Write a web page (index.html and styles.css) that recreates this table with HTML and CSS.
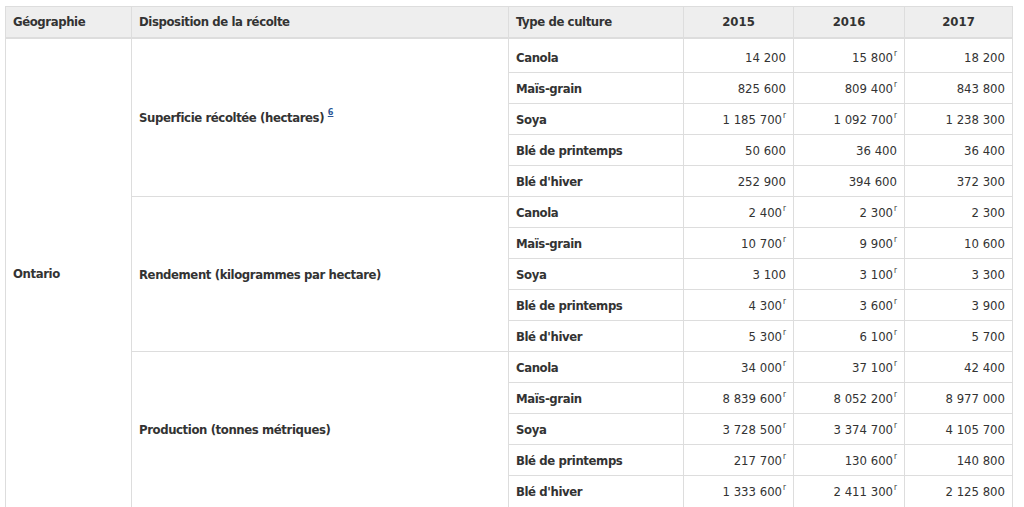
FILE: index.html
```html
<!DOCTYPE html>
<html lang="fr">
<head>
<meta charset="utf-8">
<title>Superficie, rendement et production</title>
<link rel="stylesheet" href="styles.css">
</head>
<body>
<table class="data">
  <colgroup>
    <col class="c-geo"><col class="c-disp"><col class="c-type"><col class="c-y1"><col class="c-y2"><col class="c-y3">
  </colgroup>
  <thead>
    <tr>
      <th>Géographie</th>
      <th>Disposition de la récolte</th>
      <th>Type de culture</th>
      <th class="yr">2015</th>
      <th class="yr">2016</th>
      <th class="yr">2017</th>
    </tr>
  </thead>
  <tbody>
    <tr class="first">
      <th class="geo" rowspan="15">Ontario</th>
      <th class="disp" rowspan="5">Superficie récoltée (hectares) <sup class="fn"><a href="#fn6">6</a></sup></th>
      <th class="crop">Canola</th>
      <td>14&nbsp;200</td><td>15&nbsp;800<sup class="r">r</sup></td><td>18&nbsp;200</td>
    </tr>
    <tr><th class="crop">Maïs-grain</th><td>825&nbsp;600</td><td>809&nbsp;400<sup class="r">r</sup></td><td>843&nbsp;800</td></tr>
    <tr><th class="crop">Soya</th><td>1&nbsp;185&nbsp;700<sup class="r">r</sup></td><td>1&nbsp;092&nbsp;700<sup class="r">r</sup></td><td>1&nbsp;238&nbsp;300</td></tr>
    <tr><th class="crop">Blé de printemps</th><td>50&nbsp;600</td><td>36&nbsp;400</td><td>36&nbsp;400</td></tr>
    <tr><th class="crop">Blé d'hiver</th><td>252&nbsp;900</td><td>394&nbsp;600</td><td>372&nbsp;300</td></tr>

    <tr>
      <th class="disp" rowspan="5">Rendement (kilogrammes par hectare)</th>
      <th class="crop">Canola</th>
      <td>2&nbsp;400<sup class="r">r</sup></td><td>2&nbsp;300<sup class="r">r</sup></td><td>2&nbsp;300</td>
    </tr>
    <tr><th class="crop">Maïs-grain</th><td>10&nbsp;700<sup class="r">r</sup></td><td>9&nbsp;900<sup class="r">r</sup></td><td>10&nbsp;600</td></tr>
    <tr><th class="crop">Soya</th><td>3&nbsp;100</td><td>3&nbsp;100<sup class="r">r</sup></td><td>3&nbsp;300</td></tr>
    <tr><th class="crop">Blé de printemps</th><td>4&nbsp;300<sup class="r">r</sup></td><td>3&nbsp;600<sup class="r">r</sup></td><td>3&nbsp;900</td></tr>
    <tr><th class="crop">Blé d'hiver</th><td>5&nbsp;300<sup class="r">r</sup></td><td>6&nbsp;100<sup class="r">r</sup></td><td>5&nbsp;700</td></tr>

    <tr>
      <th class="disp" rowspan="5">Production (tonnes métriques)</th>
      <th class="crop">Canola</th>
      <td>34&nbsp;000<sup class="r">r</sup></td><td>37&nbsp;100<sup class="r">r</sup></td><td>42&nbsp;400</td>
    </tr>
    <tr><th class="crop">Maïs-grain</th><td>8&nbsp;839&nbsp;600<sup class="r">r</sup></td><td>8&nbsp;052&nbsp;200<sup class="r">r</sup></td><td>8&nbsp;977&nbsp;000</td></tr>
    <tr><th class="crop">Soya</th><td>3&nbsp;728&nbsp;500<sup class="r">r</sup></td><td>3&nbsp;374&nbsp;700<sup class="r">r</sup></td><td>4&nbsp;105&nbsp;700</td></tr>
    <tr><th class="crop">Blé de printemps</th><td>217&nbsp;700<sup class="r">r</sup></td><td>130&nbsp;600<sup class="r">r</sup></td><td>140&nbsp;800</td></tr>
    <tr class="last"><th class="crop">Blé d'hiver</th><td>1&nbsp;333&nbsp;600<sup class="r">r</sup></td><td>2&nbsp;411&nbsp;300<sup class="r">r</sup></td><td>2&nbsp;125&nbsp;800</td></tr>
  </tbody>
</table>
</body>
</html>
```
FILE: styles.css
```css
html {
  overflow: hidden;
}
body {
  margin: 0;
  padding: 6px 0 0 5px;
  background: #fff;
  color: #333;
  font-family: "DejaVu Sans Condensed", "DejaVu Sans", sans-serif;
  font-size: 13px;
}
.data {
  border-collapse: collapse;
  table-layout: fixed;
  width: 1007px;
}
.c-geo { width: 126px; }
.c-disp { width: 377px; }
.c-type { width: 175px; }
.c-y1 { width: 110px; }
.c-y2 { width: 111px; }
.c-y3 { width: 108px; }

.data th,
.data td {
  border: 1px solid #ddd;
  padding: 0 7px;
  height: 30px;
  line-height: 15px;
  vertical-align: middle;
  white-space: nowrap;
}
.data th {
  letter-spacing: -0.4px;
}
.data thead th {
  background: #eeeeee;
  text-align: left;
  font-weight: bold;
  height: 29px;
  padding-bottom: 1px;
  border-bottom: 2px solid #ddd;
}
.data thead th.yr {
  text-align: center;
  letter-spacing: 0;
}
.data tbody th {
  text-align: left;
  font-weight: bold;
}
.data tbody td {
  text-align: right;
  font-weight: normal;
}
.data tr.first th.crop,
.data tr.first td {
  height: 30px;
  padding-top: 3px;
}
.data tr.last th.crop,
.data tr.last td {
  height: 31px;
}
.r {
  font-size: 8px;
  line-height: 0;
  vertical-align: 6px;
  margin-left: 1px;
}
.fn {
  font-size: 9px;
  line-height: 0;
  vertical-align: 7px;
  letter-spacing: 0;
}
.fn a {
  color: #2b5797;
}
```
